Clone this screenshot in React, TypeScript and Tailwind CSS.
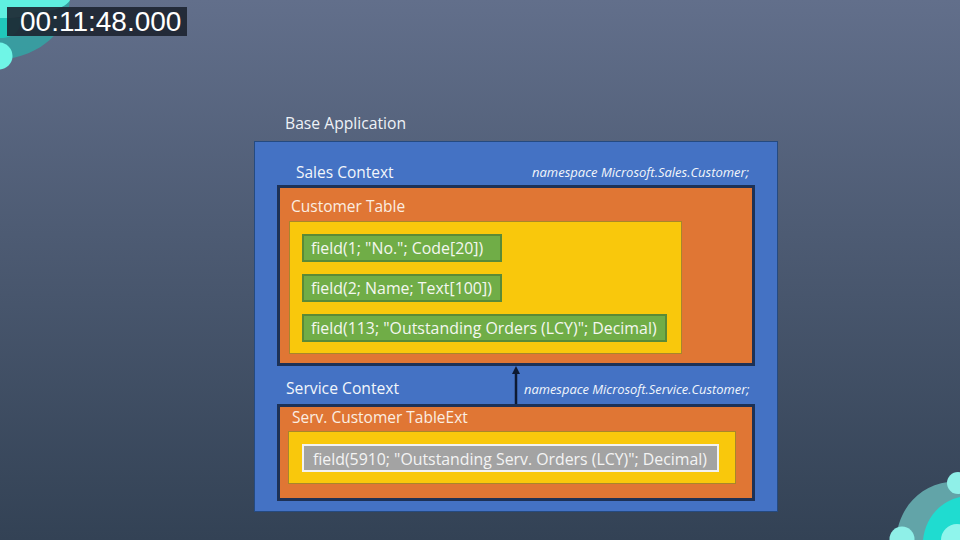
const font = "[font-family:'Open_Sans','Noto_Sans',sans-serif]";

function Field({ children, width, gray }: { children: React.ReactNode; width: string; gray?: boolean }) {
  return (
    <div
      className={
        gray
          ? `${width} h-[28px] bg-[#a3a3a3] border-2 border-[#f2f2f2] flex items-center pl-[9px] pt-[4px] text-[15.85px] text-[#f4f4f4] whitespace-nowrap`
          : `${width} h-[28px] bg-[#70ad47] border-2 border-[#5a8a37] flex items-center pl-[7px] pt-[2px] text-[15.9px] text-[#f4f7f0] whitespace-nowrap`
      }
    >
      {children}
    </div>
  );
}

export default function App() {
  return (
    <div className={`relative w-[960px] h-[540px] overflow-hidden bg-gradient-to-b from-[#626f8b] to-[#334255] ${font}`}>
      {/* corner decorations */}
      <svg className="absolute left-0 top-0" width="72" height="72" viewBox="0 0 72 72">
        <path d="M0 0H70C68 30 42 56 0 60Z" fill="#2fa9a6" opacity="0.8" />
        <path d="M0 0H70C66 8 50 12 36 12C24 18 12 18 0 18Z" fill="#5ff0e0" />
        <path d="M0 18H20C22 30 14 38 0 38Z" fill="#20c8bb" />
        <circle cx="-1" cy="56" r="13.5" fill="#6ff5e6" />
      </svg>
      <svg className="absolute right-0 bottom-0" width="72" height="70" viewBox="0 0 72 70">
        <path d="M8 70C10 40 30 16 60 12L72 10V70Z" fill="#62a4a8" />
        <path d="M35 70C37 50 50 32 72 27V70Z" fill="#1fdcd0" />
        <circle cx="70" cy="13" r="11" fill="#8ff0e8" />
        <circle cx="14" cy="69" r="12.5" fill="#8ff0e8" />
        <circle cx="69" cy="70" r="16" fill="#8ff5ec" />
      </svg>

      {/* timecode */}
      <div className="absolute left-[7px] top-[7px] w-[180px] h-[29px] bg-[#1d2430]/90 flex items-center pl-[13px] text-[28px] leading-none text-white [font-family:'Liberation_Sans',sans-serif]">
        00:11:48.000
      </div>

      <div className="flex flex-col pl-[254px] pt-[107px]">
        <div className="h-[34px] pl-[31px] flex items-center text-[15.7px] text-[#eef2f7]">Base Application</div>

        <div className="w-[524px] h-[371px] bg-[#4472c4] border border-[#254a80] px-[22px] flex flex-col">
          <div className="h-[43px] shrink-0 flex items-center justify-between pl-[19px] pr-[6px] pt-[22px] pb-[4px]">
            <span className="text-[15.5px] text-[#f2f6fb]">Sales Context</span>
            <span className="text-[13px] italic text-[#f2f6fb]">namespace Microsoft.Sales.Customer;</span>
          </div>

          <div className="w-[478px] h-[181px] shrink-0 bg-[#e07634] border-[3px] border-[#1d3156] flex flex-col">
            <div className="h-[33px] shrink-0 pl-[11px] pt-[5px] text-[15.5px] leading-[27px] text-[#fbeee2]">Customer Table</div>
            <div className="ml-[9px] w-[393px] h-[133px] bg-[#f9c80c] border border-[#a8862a] pl-[12px] pt-[12px] flex flex-col gap-[12px]">
              <Field width="w-[200px]">field(1; "No."; Code[20])</Field>
              <Field width="w-[200px]">field(2; Name; Text[100])</Field>
              <Field width="w-[365px]">field(113; "Outstanding Orders (LCY)"; Decimal)</Field>
            </div>
          </div>

          <div className="h-[38px] shrink-0 flex items-stretch">
            <div className="w-[234px] pl-[9px] pt-[7px] flex items-center text-[15.7px] text-[#f2f6fb]">Service Context</div>
            <svg className="shrink-0" width="10" height="38" viewBox="0 0 10 38">
              <path d="M5 38V6" stroke="#0d1a33" strokeWidth="2.5" fill="none" />
              <path d="M5 0L9 8H1Z" fill="#0d1a33" />
            </svg>
            <div className="pl-[3px] pt-[9px] flex items-center text-[12.9px] italic text-[#f2f6fb] whitespace-nowrap">namespace Microsoft.Service.Customer;</div>
          </div>

          <div className="w-[478px] h-[97px] shrink-0 bg-[#e07634] border-[3px] border-[#1d3156] flex flex-col">
            <div className="h-[24px] shrink-0 pl-[12px] text-[15.5px] leading-[21px] text-[#fbeee2]">Serv. Customer TableExt</div>
            <div className="ml-[8px] w-[448px] h-[53px] bg-[#f9c80c] border border-[#a8862a] pl-[13px] pt-[12px]">
              <Field width="w-[417px]" gray>field(5910; "Outstanding Serv. Orders (LCY)"; Decimal)</Field>
            </div>
          </div>
        </div>
      </div>
    </div>
  );
}
